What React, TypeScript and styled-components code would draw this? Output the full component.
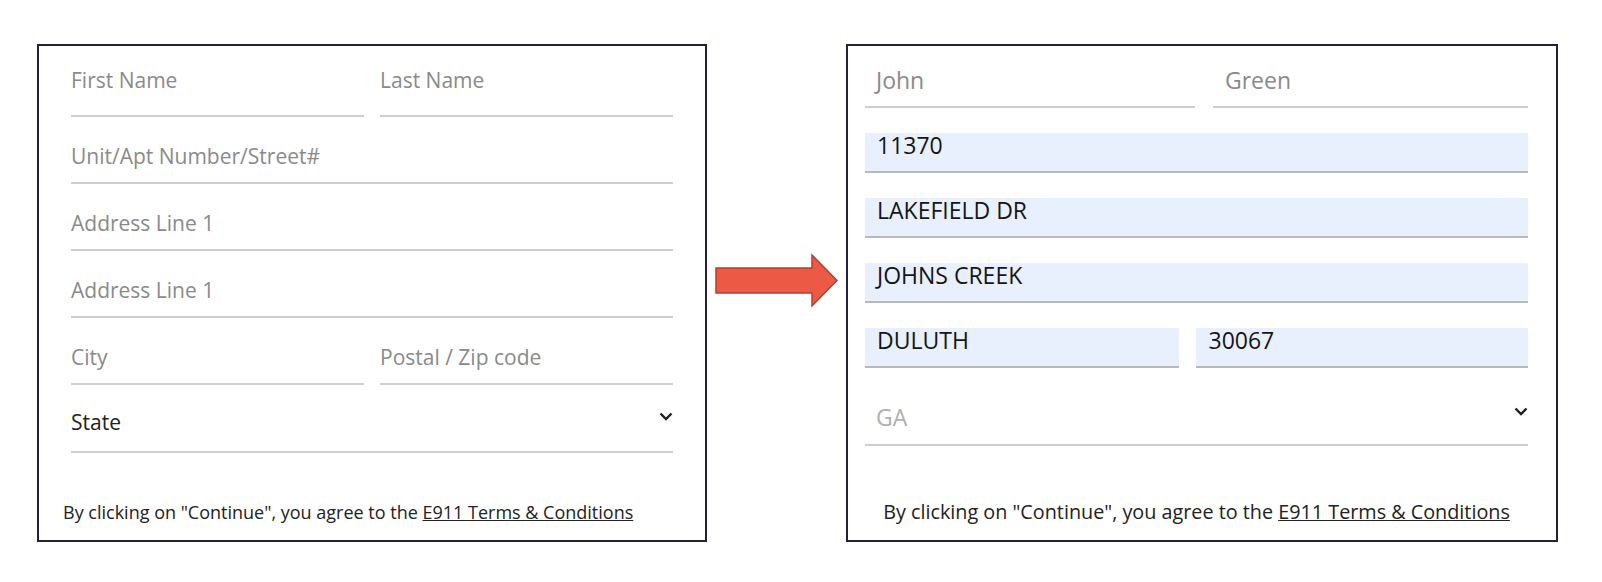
import styled, { createGlobalStyle } from "styled-components";

const GlobalStyle = createGlobalStyle`
  body {
    margin: 0;
    background: #fff;
    font-family: "Open Sans", "Liberation Sans", sans-serif;
  }
`;

const Page = styled.div`
  display: flex;
  align-items: flex-start;
  padding: 44px 0 0 37px;
`;

const Card = styled.div<{ $width: number; $pl: number; $pr: number }>`
  box-sizing: border-box;
  width: ${(p) => p.$width}px;
  height: 498px;
  border: 2px solid #23213f;
  padding: 0 ${(p) => p.$pr}px 16px ${(p) => p.$pl}px;
  display: flex;
  flex-direction: column;
`;

const Form = styled.div<{ $inset: number }>`
  display: flex;
  flex-direction: column;
  padding: 0 ${(p) => p.$inset}px;
`;

const Row = styled.div<{ $cols: string; $gap: number }>`
  display: grid;
  grid-template-columns: ${(p) => p.$cols};
  column-gap: ${(p) => p.$gap}px;
`;

const Field = styled.div<{
  $top: number;
  $bottom: number;
  $indent?: number;
  $tone?: string;
  $size?: number;
}>`
  display: flex;
  align-items: flex-start;
  justify-content: space-between;
  padding: ${(p) => p.$top}px 0 ${(p) => p.$bottom}px ${(p) => p.$indent ?? 0}px;
  border-bottom: 2px solid #cfcfcf;
  font-size: ${(p) => p.$size ?? 21}px;
  line-height: 24px;
  color: ${(p) => p.$tone ?? "#8a8a8a"};
`;

const Filled = styled.div<{ $gapTop: number }>`
  margin-top: ${(p) => p.$gapTop}px;
  padding: 0 0 14px 12px;
  background: #e8f0fe;
  border-bottom: 2px solid #b9b9b9;
  font-size: 23px;
  line-height: 24px;
  color: #151515;
`;

const Chevron = styled.svg`
  flex: none;
  margin-top: 2px;
`;

const Arrow = styled.svg`
  flex: none;
  margin: 208px 6px 0 6px;
`;

const Footer = styled.p<{ $center?: boolean; $size: number }>`
  margin: auto 0 0;
  font-size: ${(p) => p.$size}px;
  line-height: 24px;
  color: #222;
  text-align: ${(p) => (p.$center ? "center" : "left")};
  a {
    color: #222;
    text-decoration: underline;
  }
`;

const ChevronDown = () => (
  <Chevron width="14" height="9" viewBox="0 0 14 9">
    <path d="M1.5 1.5 L7 7 L12.5 1.5" fill="none" stroke="#1e1e1e" strokeWidth="2.4" />
  </Chevron>
);

const Terms = () => (
  <>
    By clicking on "Continue", you agree to the <a>E911 Terms &amp; Conditions</a>
  </>
);

const EmptyForm = () => (
  <Card $width={670} $pl={24} $pr={24}>
    <Form $inset={8}>
      <Row $cols="1fr 1fr" $gap={16}>
        <Field $top={22} $bottom={23}>First Name</Field>
        <Field $top={22} $bottom={23}>Last Name</Field>
      </Row>
      <Field $top={27} $bottom={14}>Unit/Apt Number/Street#</Field>
      <Field $top={27} $bottom={14}>Address Line 1</Field>
      <Field $top={27} $bottom={14}>Address Line 1</Field>
      <Row $cols="1fr 1fr" $gap={16}>
        <Field $top={27} $bottom={14}>City</Field>
        <Field $top={27} $bottom={14}>Postal / Zip code</Field>
      </Row>
      <Field $top={25} $bottom={17} $tone="#222">
        State
        <ChevronDown />
      </Field>
    </Form>
    <Footer $size={18}>
      <Terms />
    </Footer>
  </Card>
);

const FilledForm = () => (
  <Card $width={712} $pl={17} $pr={28}>
    <Form $inset={0}>
      <Row $cols="330fr 315fr" $gap={18}>
        <Field $top={22} $bottom={14} $indent={11} $size={23}>John</Field>
        <Field $top={22} $bottom={14} $indent={12} $size={23}>Green</Field>
      </Row>
      <Filled $gapTop={25}>11370</Filled>
      <Filled $gapTop={25}>LAKEFIELD DR</Filled>
      <Filled $gapTop={25}>JOHNS CREEK</Filled>
      <Row $cols="314fr 331fr" $gap={17}>
        <Filled $gapTop={25}>DULUTH</Filled>
        <Filled $gapTop={25}>30067</Filled>
      </Row>
      <Field $top={37} $bottom={15} $indent={11} $tone="#b0b0b0" $size={23}>
        GA
        <ChevronDown />
      </Field>
    </Form>
    <Footer $center $size={19.8}>
      <Terms />
    </Footer>
  </Card>
);

export default function App() {
  return (
    <>
      <GlobalStyle />
      <Page>
        <EmptyForm />
        <Arrow width="127" height="56" viewBox="0 0 127 56">
          <polygon
            points="3,16 99,16 99,3 124,28.5 99,54 99,41 3,41"
            fill="#ec5a46"
            stroke="#b23f2f"
            strokeWidth="1.5"
            strokeLinejoin="miter"
          />
        </Arrow>
        <FilledForm />
      </Page>
    </>
  );
}
